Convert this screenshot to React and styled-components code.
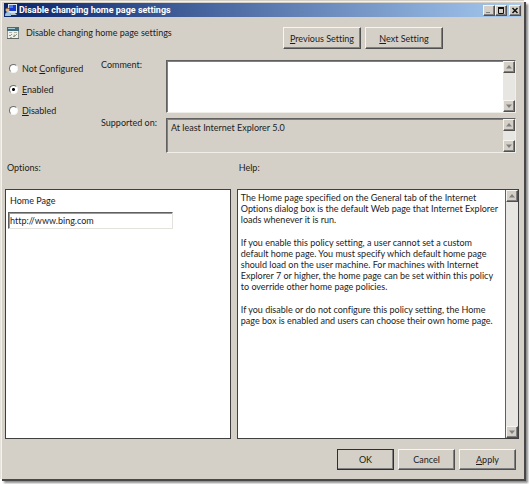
import React from "react"
import styled, { createGlobalStyle, ThemeProvider } from "styled-components"

const theme = {
  face: "#d4d0c8",
  light: "#f6f5f2",
  shade: "#808080",
  dark: "#505050",
  track: "#e8e6e2",
  text: "#1c1c1c",
  font: 'Lato, "Open Sans", sans-serif',
  titleFont: 'Roboto, "Open Sans", sans-serif',
}

const GlobalStyle = createGlobalStyle`
  * {
    box-sizing: border-box;
  }

  body {
    margin: 0;
    background: #fff;
    overflow: hidden;
  }

  button, input, textarea {
    margin: 0;
    font: inherit;
    color: inherit;
  }
`

const Desktop = styled.main`
  display: flex;
  min-height: 100vh;
  padding: 0 5px 5px 0;
`

const Window = styled.section`
  flex: 1;
  min-width: 0;
  display: flex;
  flex-direction: column;
  padding: 2px 5px 9px 3px;
  background: ${({ theme }) => theme.face};
  border-left: 1px solid #e6e3dc;
  border-top: 1px solid #d4d0c8;
  box-shadow: inset 1px 1px 0 #f4f2ee, 2px 2px 0 #484848, 4px 4px 2px #8c8c8c;
  color: ${({ theme }) => theme.text};
  font-family: ${({ theme }) => theme.font};
  font-size: 9px;
  line-height: 11px;
  font-variant-ligatures: none;
`

const TitleBar = styled.header`
  display: flex;
  align-items: center;
  height: 14px;
  margin-right: -3px;
  padding: 0 1px;
  background: linear-gradient(90deg, #0a246a, #a6caf0);
`

const Title = styled.h1`
  flex: 1;
  margin: 0 0 0 2px;
  color: #fff;
  font-family: ${({ theme }) => theme.titleFont};
  font-size: 9px;
  line-height: 13px;
  font-weight: 700;
`

const Captions = styled.div`
  display: flex;

  button:last-child {
    margin-left: 2px;
  }
`

const Raised = styled.button`
  display: flex;
  align-items: center;
  justify-content: center;
  padding: 0;
  background: ${({ theme }) => theme.face};
  border: 1px solid;
  border-color: ${({ theme }) =>
    `${theme.light} ${theme.dark} ${theme.dark} ${theme.light}`};
  box-shadow: inset -1px -1px 0 ${({ theme }) => theme.shade};
`

const CaptionButton = styled(Raised)`
  width: 12px;
  height: 11px;
`

const Intro = styled.div`
  display: flex;
  align-items: flex-start;
  padding: 10px 0 0 3px;
`

const PolicyName = styled.h2`
  flex: 1;
  margin: 0 0 0 6px;
  font-size: 9px;
  line-height: 12px;
  font-weight: 400;
`

const StepButtons = styled.div`
  display: flex;
  gap: 4px;
  margin-right: 76px;
`

const StepButton = styled(Raised)`
  width: 78px;
  height: 22px;
`

const Settings = styled.div`
  display: grid;
  grid-template-columns: 92px 1fr;
  padding: 11px 3px 0 5px;
`

const States = styled.fieldset`
  display: flex;
  flex-direction: column;
  gap: 9px;
  margin: 0;
  padding: 2px 0 0;
  border: 0;
`

const State = styled.label`
  display: flex;
  align-items: center;
  gap: 4px;
  height: 12px;
`

const Radio = styled.input`
  appearance: none;
  flex: none;
  width: 9px;
  height: 9px;
  margin: 0;
  border: 1px solid;
  border-color: #6c6c6c #f4f4f4 #f4f4f4 #6c6c6c;
  border-radius: 50%;
  background: #fff;

  &:checked {
    background: radial-gradient(circle, #000 0 1px, #fff 2px);
  }
`

const Fields = styled.div`
  display: grid;
  grid-template-columns: 65px 1fr;
  row-gap: 5px;
`

const Label = styled.label`
  line-height: 10px;
`

const Sunken = styled.div`
  display: flex;
  height: ${({ $height }) => $height}px;
  border: 1px solid;
  border-color: #606060 #f0eee9 #f0eee9 #606060;
  box-shadow: inset 1px 1px 0 ${({ theme }) => theme.shade};
  background: ${({ $disabled, theme }) => ($disabled ? theme.face : "#fff")};
`

const TextArea = styled.textarea`
  flex: 1;
  min-width: 0;
  padding: 3px 4px;
  border: 0;
  outline: 0;
  resize: none;
  overflow: hidden;
  background: transparent;
`

const Track = styled.div`
  flex: none;
  display: flex;
  flex-direction: column;
  justify-content: space-between;
  width: 12px;
  background: ${({ theme }) => theme.track};
`

const ScrollButton = styled(Raised)`
  width: 12px;
  height: 12px;
`

const Panels = styled.div`
  flex: 1;
  display: grid;
  grid-template-columns: 4fr 5fr;
  grid-template-rows: auto 1fr;
  column-gap: 6px;
  padding: 9px 0 0 1px;
`

const PanelTitle = styled.h3`
  margin: 0;
  padding: 0 2px 15px;
  font-size: 9px;
  line-height: 12px;
  font-weight: 400;
`

const Panel = styled.div`
  display: flex;
  min-width: 0;
  background: #fff;
  border: 1px solid #404040;
`

const Options = styled.div`
  flex: 1;
  display: flex;
  flex-direction: column;
  align-items: flex-start;
  gap: 6px;
  padding: 6px 2px;

  label {
    padding-left: 2px;
  }
`

const TextInput = styled.input`
  width: 75%;
  height: 17px;
  padding: 0 1px;
  border: 1px solid;
  border-color: #606060 #e4e2dc #e4e2dc #606060;
  box-shadow: inset 1px 1px 0 #9a9a9a;
  outline: 0;
`

const HelpText = styled.div`
  flex: 1;
  padding: 2px 0 0 3px;
  border-right: 1px solid #606060;
  white-space: pre-line;

  p {
    margin: 0 0 12px;
  }
`

const Footer = styled.footer`
  display: flex;
  justify-content: flex-end;
  gap: 4px;
  padding: 10px 3px 0 0;
`

const FooterButton = styled(Raised)`
  width: 57px;
  height: 21px;
  outline: ${({ $primary }) => ($primary ? "1px solid #303030" : "0")};
  outline-offset: -1px;
`

const Svg = styled.svg`
  display: block;
  flex: none;
`

const UserIcon = () => (
  <Svg width="12" height="13" viewBox="0 0 12 13">
    <path d="M3 0h9v9H3z" fill="#d8e4ee" />
    <path d="M4 1h7v6H4z" fill="#1838d0" />
    <path d="M4 1h4v3H4z" fill="#4878f0" />
    <path d="M5 9h5l2 2H6z" fill="#b8c4cc" />
    <circle cx="2.5" cy="6" r="2" fill="#d8b890" />
    <path d="M0 12c0-3 1-4 3-4s3 1 3 4z" fill="#9cc4dc" />
    <path d="M.5 5q2-3 4 0z" fill="#8c6030" />
  </Svg>
)

const PolicyIcon = () => (
  <Svg width="13" height="13" viewBox="0 0 13 13">
    <path d="M.5.5h11v11H.5z" fill="#f0f0ea" stroke="#8c9490" />
    <path d="M0 0h12v4H0z" fill="#456b78" />
    <path d="M1 1h7v1H1z" fill="#a4ccd4" />
    <path d="M2 5h3v1H2zm5 0h3v1H7z" fill="#b0b4ac" />
    <path d="M2 8l1 1 2-2M6 9l1 1 3-3" fill="none" stroke="#909890" />
    <path d="M3 10h2v1H3z" fill="#e0a040" />
    <circle cx="7.500" cy="8.500" r="1" fill="#a8a070" />
    <path d="M0 11h12v1H0z" fill="#606864" />
  </Svg>
)

const ScrollBar = ({ name }) => (
  <Track>
    <ScrollButton type="button" aria-label={`Scroll ${name} up`}>
      <Svg width="6" height="4" viewBox="0 0 6 4">
        <path d="M3 0l3 3.500H0z" fill="#808080" />
      </Svg>
    </ScrollButton>
    <ScrollButton type="button" aria-label={`Scroll ${name} down`}>
      <Svg width="6" height="4" viewBox="0 0 6 4">
        <path d="M0 .5h6L3 4z" fill="#808080" />
      </Svg>
    </ScrollButton>
  </Track>
)

const App = () => (
  <ThemeProvider theme={theme}>
    <GlobalStyle />
    <Desktop>
      <Window>
        <TitleBar>
          <UserIcon />
          <Title>Disable changing home page settings</Title>
          <Captions>
            <CaptionButton type="button" aria-label="Minimize">
              <Svg width="8" height="7" viewBox="0 0 8 7">
                <path d="M1 5.500h4" stroke="#808080" />
              </Svg>
            </CaptionButton>
            <CaptionButton type="button" aria-label="Maximize">
              <Svg width="8" height="7" viewBox="0 0 8 7">
                <path d="M1.500 1v5.500h5V1" fill="none" stroke="#111" />
                <path d="M1 1h6" stroke="#111" strokeWidth="2" />
              </Svg>
            </CaptionButton>
            <CaptionButton type="button" aria-label="Close">
              <Svg width="8" height="7" viewBox="0 0 8 7">
                <path d="M1.500 1l5 5M6.500 1l-5 5" stroke="#111" strokeWidth="1.500" />
              </Svg>
            </CaptionButton>
          </Captions>
        </TitleBar>

        <Intro>
          <PolicyIcon />
          <PolicyName>Disable changing home page settings</PolicyName>
          <StepButtons>
            <StepButton type="button">
              <span><u>P</u>revious Setting</span>
            </StepButton>
            <StepButton type="button">
              <span><u>N</u>ext Setting</span>
            </StepButton>
          </StepButtons>
        </Intro>

        <Settings>
          <States>
            <State>
              <Radio type="radio" name="state" />
              <span>Not <u>C</u>onfigured</span>
            </State>
            <State>
              <Radio type="radio" name="state" defaultChecked />
              <span><u>E</u>nabled</span>
            </State>
            <State>
              <Radio type="radio" name="state" />
              <span><u>D</u>isabled</span>
            </State>
          </States>
          <Fields>
            <Label htmlFor="comment">Comment:</Label>
            <Sunken $height={53}>
              <TextArea id="comment" />
              <ScrollBar name="comment" />
            </Sunken>
            <Label htmlFor="supported">Supported on:</Label>
            <Sunken $height={35} $disabled>
              <TextArea
                id="supported"
                readOnly
                defaultValue="At least Internet Explorer 5.0"
              />
              <ScrollBar name="supported" />
            </Sunken>
          </Fields>
        </Settings>

        <Panels>
          <PanelTitle>Options:</PanelTitle>
          <PanelTitle>Help:</PanelTitle>
          <Panel>
            <Options>
              <Label htmlFor="homepage">Home Page</Label>
              <TextInput
                id="homepage"
                type="text"
                defaultValue="http://www.bing.com"
              />
            </Options>
          </Panel>
          <Panel>
            <HelpText>
              <p>
                {`The Home page specified on the General tab of the Internet
                Options dialog box is the default Web page that Internet Explorer
                loads whenever it is run.`}
              </p>
              <p>
                {`If you enable this policy setting, a user cannot set a custom
                default home page. You must specify which default home page
                should load on the user machine. For machines with Internet
                Explorer 7 or higher, the home page can be set within this policy
                to override other home page policies.`}
              </p>
              <p>
                {`If you disable or do not configure this policy setting, the Home
                page box is enabled and users can choose their own home page.`}
              </p>
            </HelpText>
            <ScrollBar name="help" />
          </Panel>
        </Panels>

        <Footer>
          <FooterButton type="submit" $primary>OK</FooterButton>
          <FooterButton type="button">Cancel</FooterButton>
          <FooterButton type="button">
            <span><u>A</u>pply</span>
          </FooterButton>
        </Footer>
      </Window>
    </Desktop>
  </ThemeProvider>
)

export default App
